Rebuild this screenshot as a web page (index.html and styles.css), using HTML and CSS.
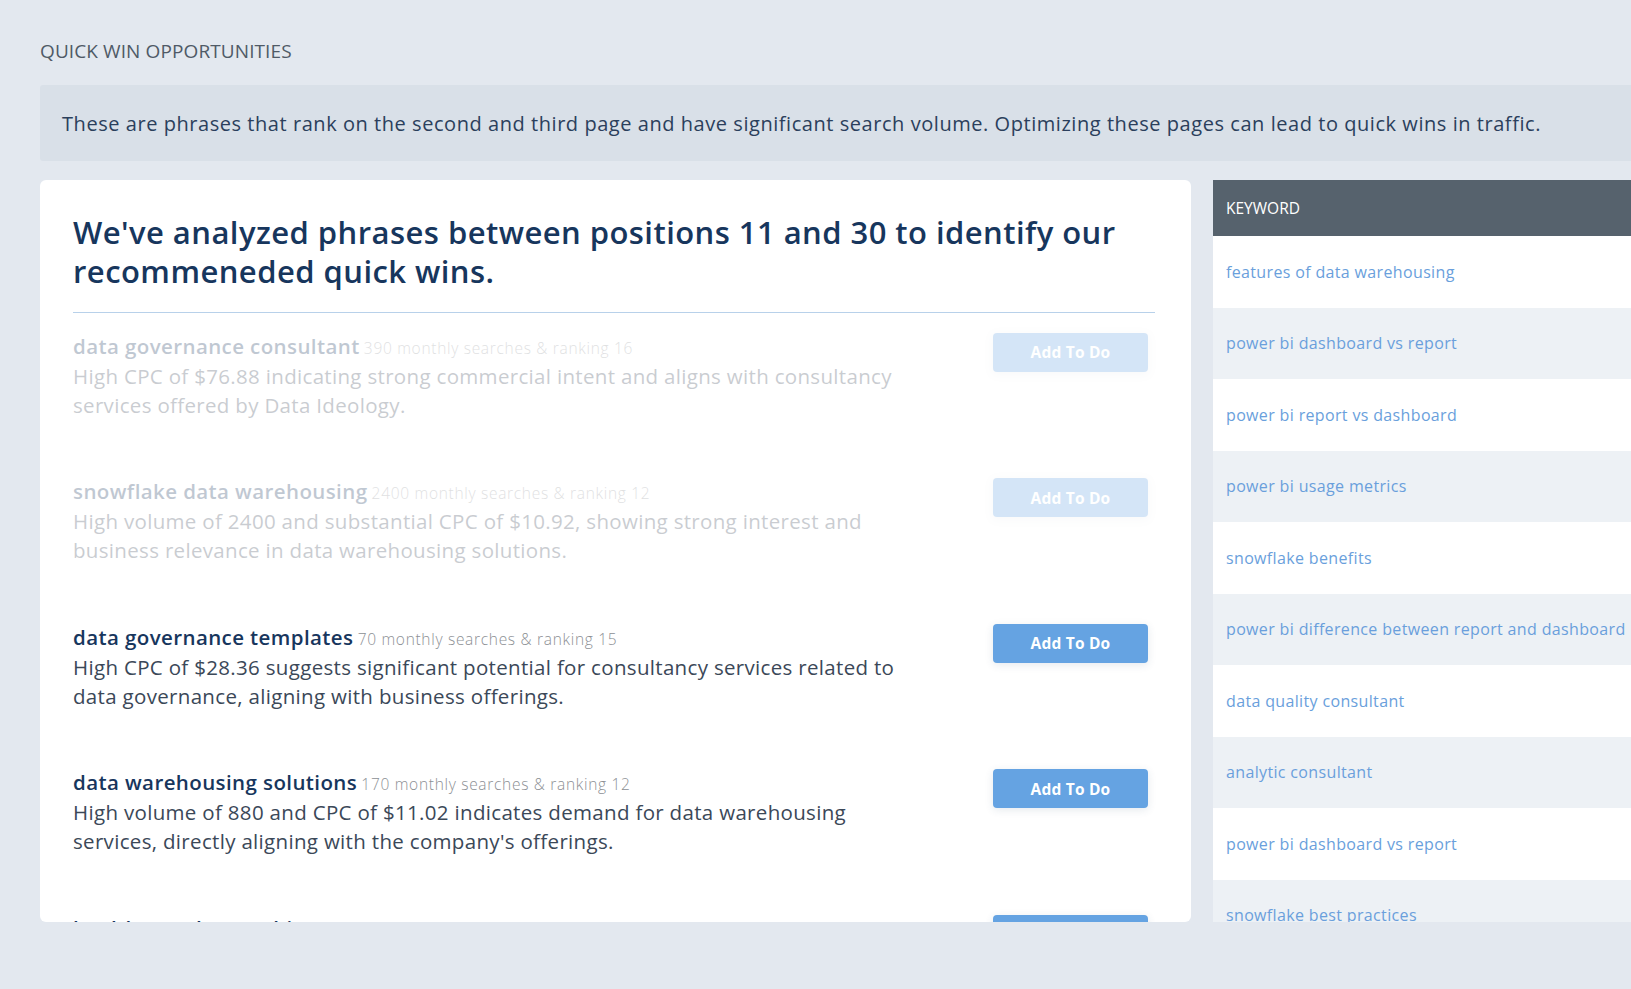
FILE: index.html
```html
<!DOCTYPE html>
<html lang="en">
<head>
<meta charset="utf-8">
<title>Quick Win Opportunities</title>
<link rel="stylesheet" href="styles.css">
</head>
<body>
<main class="page">
  <h2 class="section-title">QUICK WIN OPPORTUNITIES</h2>
  <div class="banner">These are phrases that rank on the second and third page and have significant search volume. Optimizing these pages can lead to quick wins in traffic.</div>
  <div class="content">
    <section class="card">
      <h1 class="card-heading">We've analyzed phrases between positions 11 and 30 to identify our recommeneded quick wins.</h1>
      <div class="divider"></div>
      <div class="items">
        <div class="item faded">
          <div class="item-text">
            <div class="item-title"><span class="kw">data governance consultant</span> <span class="meta">390 monthly searches &amp; ranking 16</span></div>
            <p class="item-desc">High CPC of $76.88 indicating strong commercial intent and aligns with consultancy services offered by Data Ideology.</p>
          </div>
          <button class="btn">Add To Do</button>
        </div>
        <div class="item faded">
          <div class="item-text">
            <div class="item-title"><span class="kw">snowflake data warehousing</span> <span class="meta">2400 monthly searches &amp; ranking 12</span></div>
            <p class="item-desc">High volume of 2400 and substantial CPC of $10.92, showing strong interest and business relevance in data warehousing solutions.</p>
          </div>
          <button class="btn">Add To Do</button>
        </div>
        <div class="item">
          <div class="item-text">
            <div class="item-title"><span class="kw">data governance templates</span> <span class="meta">70 monthly searches &amp; ranking 15</span></div>
            <p class="item-desc">High CPC of $28.36 suggests significant potential for consultancy services related to data governance, aligning with business offerings.</p>
          </div>
          <button class="btn">Add To Do</button>
        </div>
        <div class="item">
          <div class="item-text">
            <div class="item-title"><span class="kw">data warehousing solutions</span> <span class="meta">170 monthly searches &amp; ranking 12</span></div>
            <p class="item-desc">High volume of 880 and CPC of $11.02 indicates demand for data warehousing services, directly aligning with the company's offerings.</p>
          </div>
          <button class="btn">Add To Do</button>
        </div>
        <div class="item">
          <div class="item-text">
            <div class="item-title"><span class="kw">healthcare data architecture</span> <span class="meta">90 monthly searches &amp; ranking 14</span></div>
            <p class="item-desc">Relevant to data architecture consulting services for healthcare organizations.</p>
          </div>
          <button class="btn">Add To Do</button>
        </div>
      </div>
    </section>
    <aside class="keywords">
      <div class="kw-head">KEYWORD</div>
      <div class="kw-row">features of data warehousing</div>
      <div class="kw-row">power bi dashboard vs report</div>
      <div class="kw-row">power bi report vs dashboard</div>
      <div class="kw-row">power bi usage metrics</div>
      <div class="kw-row">snowflake benefits</div>
      <div class="kw-row">power bi difference between report and dashboard</div>
      <div class="kw-row">data quality consultant</div>
      <div class="kw-row">analytic consultant</div>
      <div class="kw-row">power bi dashboard vs report</div>
      <div class="kw-row">snowflake best practices</div>
    </aside>
  </div>
</main>
</body>
</html>
```
FILE: styles.css
```css
* { box-sizing: border-box; }

html, body {
  margin: 0;
  height: 100%;
}

body {
  background: #e3e8ef;
  font-family: "Open Sans", "Noto Sans", sans-serif;
  overflow: hidden;
}

.page {
  padding-left: 40px;
  height: 989px;
}

.section-title {
  margin: 0;
  padding-top: 39px;
  font-size: 19px;
  line-height: 24px;
  font-weight: 400;
  letter-spacing: 0.1px;
  color: #4f5a66;
}

.banner {
  margin-top: 22px;
  height: 76px;
  display: flex;
  align-items: center;
  padding: 0 22px;
  background: #d9e0e8;
  border-radius: 3px 0 0 3px;
  font-size: 20px;
  letter-spacing: 0.55px;
  color: #2b3f5c;
}

.content {
  margin-top: 19px;
  height: 742px;
  display: flex;
  gap: 22px;
}

.card {
  width: 1151px;
  flex: none;
  background: #ffffff;
  border-radius: 6px;
  overflow: hidden;
  padding: 33px 36px 0 33px;
}

.card-heading {
  margin: 0;
  font-size: 31px;
  line-height: 39px;
  font-weight: 600;
  letter-spacing: 0.45px;
  color: #17365d;
}

.divider {
  margin-top: 21px;
  border-top: 1px solid #b8d1ea;
}

.items {
  padding-top: 20.5px;
}

.item {
  display: flex;
  align-items: flex-start;
  padding-bottom: 59.6px;
}

.item.faded {
  opacity: 0.27;
}

.item-text {
  width: 840px;
  flex: none;
}

.item-title {
  height: 28px;
  line-height: 28px;
  white-space: nowrap;
}

.kw {
  font-size: 20.5px;
  line-height: 1;
  font-weight: 600;
  letter-spacing: 0.4px;
  color: #17365d;
}

.meta {
  font-size: 15.5px;
  line-height: 1;
  font-weight: 300;
  letter-spacing: 0.7px;
  color: #8c8f94;
}

.item-desc {
  margin: 0;
  font-size: 20.5px;
  line-height: 29px;
  letter-spacing: 0.32px;
  color: #3b4858;
}

.btn {
  margin-left: auto;
  margin-right: 7px;
  margin-top: -1px;
  width: 155px;
  height: 39px;
  border: none;
  border-radius: 4px;
  background: #65a3e2;
  color: #ffffff;
  font-family: inherit;
  font-size: 15.5px;
  font-weight: 700;
  letter-spacing: 0.2px;
  box-shadow: 0 2px 8px rgba(40, 70, 110, 0.12);
}

.keywords {
  flex: 1;
  overflow: hidden;
}

.kw-head {
  height: 56px;
  display: flex;
  align-items: center;
  padding-left: 13px;
  background: #56626d;
  color: #ffffff;
  font-size: 15.5px;
  font-weight: 500;
}

.kw-row {
  height: 71.5px;
  display: flex;
  align-items: center;
  padding-left: 13px;
  background: #ffffff;
  color: #6a9fdc;
  font-size: 16px;
  letter-spacing: 0.35px;
  white-space: nowrap;
}

.kw-row:nth-of-type(odd) {
  background: #edf1f5;
}
```
